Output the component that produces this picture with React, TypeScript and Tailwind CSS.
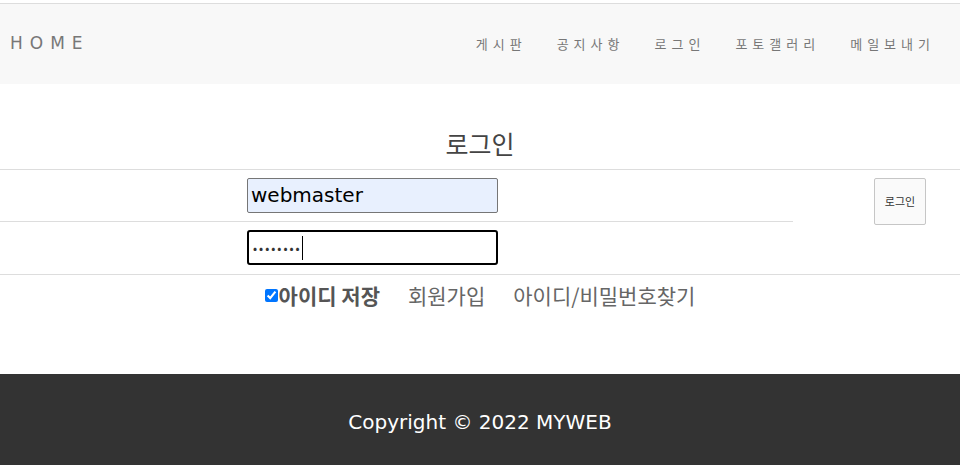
import React from 'react'

const latin = "font-['DejaVu_Sans','Noto_Sans_CJK_KR',sans-serif]"
const korean = "font-['Noto_Sans_CJK_KR',sans-serif]"

export default function App() {
  const menu = ['게시판', '공지사항', '로그인', '포토갤러리', '메일보내기']

  return (
    <div className={`min-h-[465px] bg-white ${korean}`}>
      {/* Navbar */}
      <div className="pt-[3px]">
        <nav className="h-[81px] border-t border-[#dddddd] bg-[#f8f8f8] flex items-center justify-between pl-[10px] pr-[30px]">
          <span className={`${latin} text-[17px] tracking-[7px] text-[#777777]`}>HOME</span>
          <ul className="flex items-center gap-[35px]">
            {menu.map((m) => (
              <li key={m} className="text-[13px] tracking-[5px] text-[#777777] -mr-[5px]">
                {m}
              </li>
            ))}
          </ul>
        </nav>
      </div>

      {/* Login */}
      <section className="pt-[41px] pb-[62px]">
        <h2 className="text-center text-[25px] leading-[36px] text-[#444444] pb-[8px]">로그인</h2>
        <div className="grid grid-cols-[239px_554px_167px] border-t border-[#dddddd]">
          <div className="h-[52px] border-b border-[#dddddd]" />
          <div className="h-[52px] border-b border-[#dddddd] pt-[8px] pl-[8px]">
            <div className={`${latin} w-[251px] h-[35px] rounded-[2px] border border-[#767676] bg-[#e8f0fe] px-[3px] text-[20px] leading-[33px] text-black`}>
              webmaster
            </div>
          </div>
          <div className="row-span-2 flex justify-end pt-[8px] pr-[34px]">
            <button className="w-[52px] h-[47px] rounded-[2px] border border-[#c6c6c6] bg-[#fafafa] text-[11px] text-[#333333]">
              로그인
            </button>
          </div>
          <div className="h-[52px]" />
          <div className="h-[52px] pt-[8px] pl-[8px]">
            <div className="w-[251px] h-[35px] rounded-[3px] border-2 border-black bg-white px-[4px] flex items-center">
              <span className="text-[12px] tracking-[2px] text-[#333333]">••••••••</span>
              <span className="w-px h-[24px] bg-black" />
            </div>
          </div>
        </div>
        <div className="border-t border-[#dddddd] flex justify-center items-center gap-[28px] pt-[5px] text-[21px] text-[#666666]">
          <label className="flex items-center">
            <input type="checkbox" defaultChecked className="w-[13px] h-[13px] m-0 mr-[1px]" />
            <span className="font-bold text-[#555555]">아이디 저장</span>
          </label>
          <span>회원가입</span>
          <span>아이디/비밀번호찾기</span>
        </div>
      </section>

      {/* Footer */}
      <footer className="h-[91px] bg-[#333333] flex items-center justify-center pt-[5px]">
        <p className={`${latin} text-[20px] text-white`}>Copyright © 2022 MYWEB</p>
      </footer>
    </div>
  )
}
